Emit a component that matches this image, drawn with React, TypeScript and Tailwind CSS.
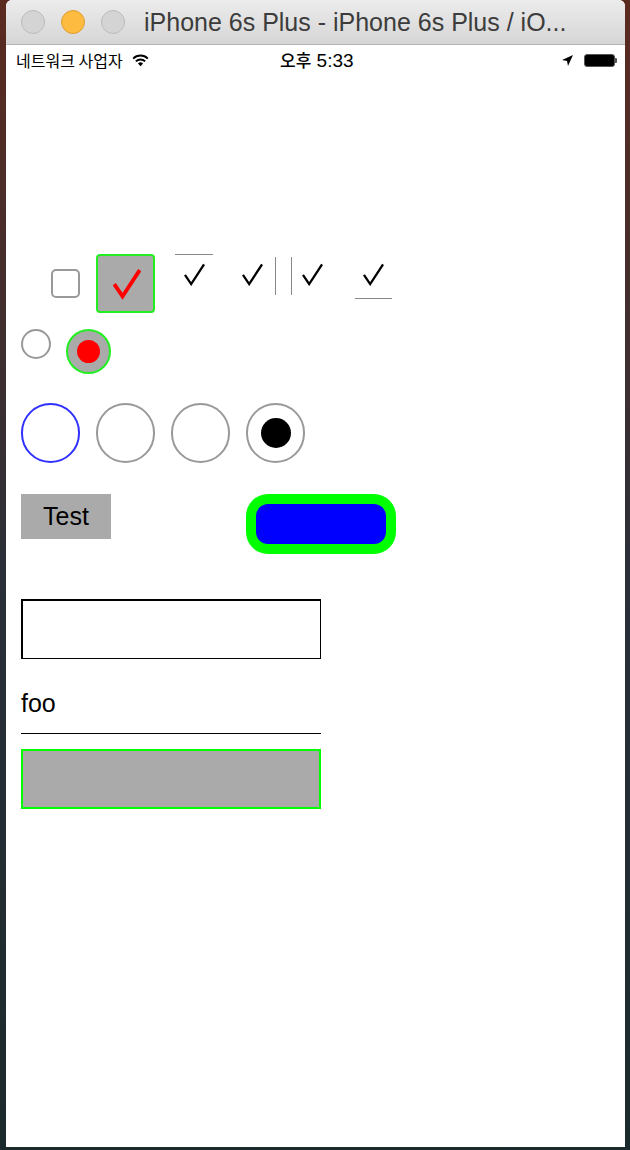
import React from "react";

function Check({ className = "", color = "#000", w = 2.4 }: { className?: string; color?: string; w?: number }) {
  return (
    <svg className={className} viewBox="0 0 22 23" fill="none">
      <polyline points="1,12 7.5,21.5 21,1" stroke={color} strokeWidth={w} strokeLinejoin="miter" />
    </svg>
  );
}

export default function App() {
  return (
    <div className="w-[630px] h-[1150px] overflow-hidden bg-gradient-to-b from-[#5b2a1f] via-[#2a2f38] to-[#1b2a2c] pl-[6px] pr-[5px] font-['Liberation_Sans',sans-serif]">
      <div className="w-[619px] h-[1147px] bg-white rounded-t-[6px] overflow-hidden flex flex-col">
        {/* Title bar */}
        <div className="h-[45px] shrink-0 bg-gradient-to-b from-[#ececec] to-[#d6d6d6] border-b border-[#b4b4b4] flex items-center pl-[15px]">
          <div className="flex gap-[16px]">
            <span className="w-[24px] h-[24px] rounded-full bg-[#d4d4d4] border border-[#bcbcbc]" />
            <span className="w-[24px] h-[24px] rounded-full bg-[#fdbc40] border border-[#de9f34]" />
            <span className="w-[24px] h-[24px] rounded-full bg-[#d4d4d4] border border-[#bcbcbc]" />
          </div>
          <span className="ml-[19px] text-[25px] text-[#3c3c3c] whitespace-nowrap leading-none">
            iPhone 6s Plus - iPhone 6s Plus / iO...
          </span>
        </div>

        {/* Status bar */}
        <div className="h-[30px] shrink-0 flex items-center px-[10px] text-[16px] text-black relative font-['Noto_Sans_CJK_KR',sans-serif]">
          <span className="leading-none">네트워크 사업자</span>
          <svg className="ml-[9px] w-[17px] h-[13px]" viewBox="0 0 16 12">
            <path d="M8 11.5 L5.6 8.9 A3.4 3.4 0 0 1 10.4 8.9 Z" fill="#000" />
            <path d="M3.6 6.8 A6.3 6.3 0 0 1 12.4 6.8" stroke="#000" strokeWidth="1.8" fill="none" />
            <path d="M1.1 4.2 A9.8 9.8 0 0 1 14.9 4.2" stroke="#000" strokeWidth="1.8" fill="none" />
          </svg>
          <span className="absolute left-[274px] top-[6px] leading-none font-medium font-['Liberation_Sans','Noto_Sans_CJK_KR',sans-serif] text-[19px]">
            <span className="font-['Noto_Sans_CJK_KR',sans-serif] text-[17px]">오후</span> 5:33
          </span>
          <div className="ml-auto flex items-center gap-[11px] -mr-[2px]">
            <svg className="w-[11px] h-[11px]" viewBox="0 0 11 11">
              <path d="M11 0 L0 5 L5 6 L6 11 Z" fill="#000" />
            </svg>
            <div className="flex items-center">
              <div className="w-[31px] h-[13px] rounded-[3px] bg-black border border-[#555]" />
              <div className="w-[2px] h-[5px] bg-[#555] rounded-r-[1px]" />
            </div>
          </div>
        </div>

        {/* Content */}
        <div className="pl-[15px] pt-[179px] flex flex-col">
          {/* checkboxes */}
          <div className="flex items-center h-[59px]">
            <div className="ml-[30px] w-[29px] h-[29px] border-2 border-[#999] rounded-[5px]" />
            <div className="ml-[16px] w-[59px] h-[59px] bg-[#aaaaaa] border-2 border-[#22ee22] rounded-[4px] flex items-center justify-center">
              <Check className="w-[28px] h-[33px] ml-[2px]" color="#ff0000" w={3} />
            </div>
            <div className="ml-[20px] w-[38px] h-[59px] self-start border-t border-[#888] flex justify-center pt-[8px]">
              <Check className="w-[21px] h-[23px]" />
            </div>
            <Check className="ml-[29px] w-[21px] h-[23px] self-start mt-[9px]" />
            <div className="ml-[12px] w-px h-[38px] self-start mt-[3px] bg-[#888]" />
            <div className="ml-[15px] w-px h-[38px] self-start mt-[3px] bg-[#888]" />
            <Check className="ml-[10px] w-[21px] h-[23px] self-start mt-[9px]" />
            <div className="ml-[32px] w-[37px] h-[45px] self-start border-b border-[#888] flex justify-center pt-[9px]">
              <Check className="w-[21px] h-[23px]" />
            </div>
          </div>

          {/* radios */}
          <div className="flex items-start mt-[16px]">
            <div className="w-[30px] h-[30px] rounded-full border-2 border-[#999]" />
            <div className="ml-[15px] w-[45px] h-[45px] rounded-full bg-[#aaaaaa] border-2 border-[#22ee22] flex items-center justify-center">
              <div className="w-[23px] h-[23px] rounded-full bg-[#ff0000]" />
            </div>
          </div>

          {/* big radios */}
          <div className="flex gap-[16px] mt-[29px]">
            <div className="w-[59px] h-[60px] rounded-full border-2 border-[#3030ff]" />
            <div className="w-[59px] h-[60px] rounded-full border-2 border-[#999]" />
            <div className="w-[59px] h-[60px] rounded-full border-2 border-[#999]" />
            <div className="w-[59px] h-[60px] rounded-full border-2 border-[#999] flex items-center justify-center">
              <div className="w-[30px] h-[30px] rounded-full bg-black" />
            </div>
          </div>

          {/* buttons */}
          <div className="flex items-start mt-[31px]">
            <div className="w-[90px] h-[45px] bg-[#aaaaaa] flex items-center justify-center text-[25px] text-black leading-none">
              Test
            </div>
            <div className="ml-[135px] w-[150px] h-[60px] rounded-[22px] bg-[#00ff00] p-[10px]">
              <div className="w-full h-full rounded-[12px] bg-[#0000ff]" />
            </div>
          </div>

          {/* text fields */}
          <div className="mt-[45px] w-[300px] h-[60px] border-t-2 border-l-2 border-r border-b border-black" />
          <div className="mt-[31px] w-[300px] h-[44px] pt-[1px] border-b border-black text-[25px] text-black leading-none">
            foo
          </div>
          <div className="mt-[15px] w-[300px] h-[60px] bg-[#aaaaaa] border-2 border-[#00ff00]" />
        </div>
      </div>
    </div>
  );
}
